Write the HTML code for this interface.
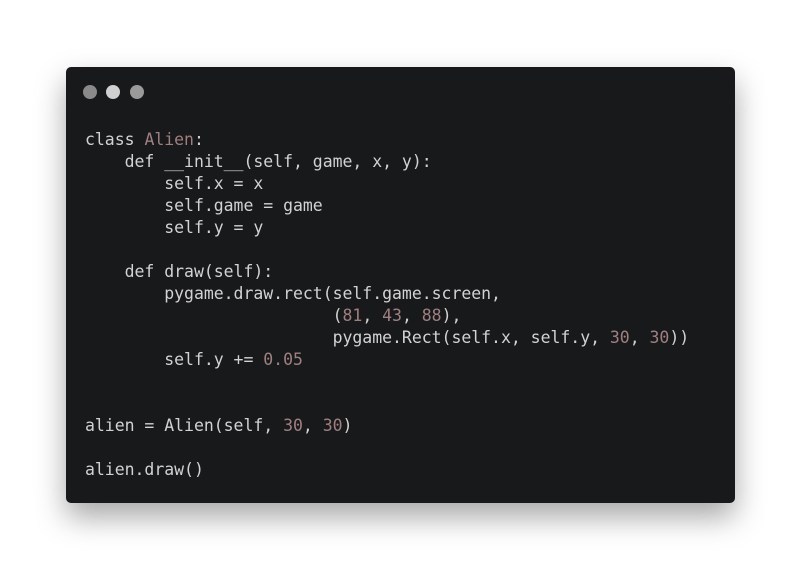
<!DOCTYPE html>
<html><head><style>
html,body{margin:0;padding:0;background:#fff;width:800px;height:570px;overflow:hidden}
.win{position:absolute;left:66px;top:67px;width:669px;height:436px;background:#18191b;border-radius:5px;box-shadow:0 14px 30px rgba(0,0,0,0.35)}
.dot{position:absolute;top:18px;width:14px;height:14px;border-radius:50%}
pre{position:absolute;left:19px;top:62px;margin:0;font-family:"DejaVu Sans Mono","Liberation Mono",monospace;font-size:16.5px;letter-spacing:-0.03px;line-height:22px;color:#d2d2d2}
.n{color:#a07f80}
</style></head><body>
<div class="win">
<div class="dot" style="left:17px;background:#8a8a8a"></div>
<div class="dot" style="left:40px;background:#d0d0d0"></div>
<div class="dot" style="left:64px;background:#9a9a9a"></div>
<pre>class <span class="n">Alien</span>:
    def __init__(self, game, x, y):
        self.x = x
        self.game = game
        self.y = y

    def draw(self):
        pygame.draw.rect(self.game.screen,
                         (<span class="n">81</span>, <span class="n">43</span>, <span class="n">88</span>),
                         pygame.Rect(self.x, self.y, <span class="n">30</span>, <span class="n">30</span>))
        self.y += <span class="n">0.05</span>


alien = Alien(self, <span class="n">30</span>, <span class="n">30</span>)

alien.draw()</pre>
</div>
</body></html>
